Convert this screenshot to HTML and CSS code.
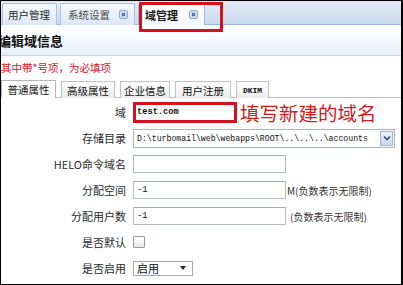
FILE: index.html
```html
<!DOCTYPE html>
<html>
<head>
<meta charset="utf-8">
<link rel="stylesheet" href="styles.css">
</head>
<body>
<div class="frame">
  <div class="tabbar">
    <div class="tab tab-1"><span class="tab-text">用户管理</span></div>
    <div class="tab tab-2"><span class="tab-text">系统设置</span><span class="close"><svg width="9" height="9" viewBox="0 0 9 9"><rect x="0.5" y="0.5" width="8" height="8" rx="1.5" fill="#d3e0f1" stroke="#8fa8cc"/><path d="M3 3 L6 6 M6 3 L3 6" stroke="#3c5f93" stroke-width="1.1"/></svg></span></div>
    <div class="tab tab-3 active"><span class="tab-text">域管理</span><span class="close"><svg width="9" height="9" viewBox="0 0 9 9"><rect x="0.5" y="0.5" width="8" height="8" rx="1.5" fill="#d3e0f1" stroke="#8fa8cc"/><path d="M3 3 L6 6 M6 3 L3 6" stroke="#3c5f93" stroke-width="1.1"/></svg></span></div>
  </div>
  <div class="highlight"></div>
  <div class="header"><span class="title">编辑域信息</span></div>
  <div class="note">其中带*号项，为必填项</div>
  <div class="subtabs">
    <div class="stab st-1 active">普通属性</div>
    <div class="stab st-2">高级属性</div>
    <div class="stab st-3">企业信息</div>
    <div class="stab st-4">用户注册</div>
    <div class="stab st-5 dkim">DKIM</div>
  </div>
  <div class="form">
    <div class="row">
      <label class="lbl">域</label>
      <span class="redbox"><span class="field mono">test.com</span></span>
      <span class="annot">填写新建的域名</span>
    </div>
    <div class="row">
      <label class="lbl">存储目录</label>
      <span class="select-wide"><span class="mono path">D:\turbomail\web\webapps\ROOT\..\..\..\accounts</span><span class="arrow"><svg width="8" height="6" viewBox="0 0 8 6"><path d="M1 1.5 L4 4.5 L7 1.5" fill="none" stroke="#2d4e86" stroke-width="1.6"/></svg></span></span>
    </div>
    <div class="row">
      <label class="lbl">HELO命令域名</label>
      <span class="input"></span>
    </div>
    <div class="row">
      <label class="lbl">分配空间</label>
      <span class="input mono">-1</span><span class="hint">M(负数表示无限制)</span>
    </div>
    <div class="row">
      <label class="lbl">分配用户数</label>
      <span class="input mono">-1</span><span class="hint hint-gap">(负数表示无限制)</span>
    </div>
    <div class="row">
      <label class="lbl">是否默认</label>
      <span class="checkbox"></span>
    </div>
    <div class="row">
      <label class="lbl">是否启用</label>
      <span class="select-small"><span class="sel-text">启用</span><span class="tri"></span></span>
    </div>
    <div class="row">
      <label class="lbl"></label>
      <span class="input"></span>
    </div>
  </div>
</div>
</body>
</html>
```
FILE: styles.css
```css
html, body {
  margin: 0;
  padding: 0;
  background: #fff;
}
.frame {
  position: relative;
  width: 403px;
  height: 285px;
  box-sizing: border-box;
  border: 1px solid #000;
  border-right-width: 2px;
  overflow: hidden;
  background: #fff;
  font-family: "Noto Sans CJK SC", "DejaVu Sans", sans-serif;
  font-size: 11px;
  color: #222;
}
.tabbar {
  height: 24px;
  box-sizing: border-box;
  display: flex;
  align-items: flex-end;
  gap: 3px;
  padding-left: 1px;
  background: linear-gradient(#e2eaf6, #cbdaef);
  border-bottom: 1px solid #99b6de;
}
.tab {
  box-sizing: border-box;
  display: flex;
  align-items: center;
  border: 1px solid #a9c1e2;
  border-bottom: none;
  border-radius: 2px 2px 0 0;
  background: linear-gradient(#f6f9fd, #dce7f5);
  font-size: 10.5px;
  color: #2a2a2a;
  margin-bottom: -1px;
  height: 22px;
}
.tab-1 { width: 55px; padding-left: 5px; }
.tab-2 { width: 75px; padding-left: 7px; color: #4a4a4a; }
.tab-3 { width: 67px; padding-left: 6px; }
.tab.active {
  background: linear-gradient(#ffffff, #f4f8fd);
  border-color: #9fb9dd;
  font-weight: bold;
  font-size: 11px;
  color: #1a1a1a;
}
.tab-text { white-space: nowrap; }
.close {
  display: flex;
  margin-left: auto;
  margin-right: 6px;
}
.highlight {
  position: absolute;
  left: 138px;
  top: 1px;
  width: 84px;
  height: 30px;
  box-sizing: border-box;
  border: 3px solid #d4121e;
}
.header {
  height: 31px;
  box-sizing: border-box;
  display: flex;
  align-items: center;
  background: linear-gradient(#ffffff 0%, #f8fbfe 40%, #e6eef9 100%);
  border-bottom: 1px solid #cfd8e4;
}
.title {
  margin-left: -3px;
  font-size: 13px;
  font-weight: bold;
  color: #111;
  white-space: nowrap;
}
.note {
  height: 24px;
  line-height: 24px;
  font-size: 10.5px;
  color: #e0141e;
  white-space: nowrap;
}
.subtabs {
  height: 18px;
  box-sizing: border-box;
  display: flex;
  align-items: flex-end;
  gap: 5px;
  border-bottom: 1px solid #bdbdbd;
}
.stab {
  box-sizing: border-box;
  display: flex;
  align-items: center;
  justify-content: center;
  border: 1px solid #c2c2c2;
  border-bottom: none;
  background: linear-gradient(#ffffff, #ececec);
  font-size: 10.5px;
  color: #111;
  margin-bottom: -1px;
  height: 17px;
}
.stab.active { background: #fff; border-color: #b6b6b6; height: 18px; }
.st-1 { width: 55px; }
.st-2 { width: 54px; }
.st-3 { width: 50px; }
.st-4 { width: 56px; }
.st-5 { width: 33px; }
.dkim {
  font-family: "Liberation Mono", monospace;
  font-size: 8px;
  font-weight: bold;
}
.form {
  padding-top: 1px;
  display: flex;
  flex-direction: column;
}
.row {
  height: 26px;
  display: flex;
  align-items: center;
}
.lbl {
  width: 125px;
  flex: none;
  text-align: right;
  margin-right: 7px;
  font-size: 11px;
  color: #2a2a2a;
  white-space: nowrap;
}
.mono {
  font-family: "Liberation Mono", monospace;
  font-size: 8.7px;
  color: #111;
}
.redbox {
  display: flex;
  width: 104px;
  height: 21px;
  box-sizing: border-box;
  border: 3px solid #d4121e;
}
.field {
  flex: 1;
  display: flex;
  align-items: center;
  padding-left: 1px;
  background: #fff;
  font-weight: bold;
}
.annot {
  margin-left: 3px;
  font-size: 19.5px;
  color: #d41a1a;
  white-space: nowrap;
}
.select-wide {
  width: 262px;
  height: 19px;
  box-sizing: border-box;
  display: flex;
  align-items: center;
  border: 1px solid #a9b3c2;
  background: #fff;
  padding-left: 3px;
  padding-right: 1px;
}
.path {
  flex: 1 1 auto;
  min-width: 0;
  overflow: hidden;
  white-space: nowrap;
  font-size: 8.2px;
}
.arrow {
  flex: none;
  margin-left: 3px;
  width: 13px;
  height: 15px;
  box-sizing: border-box;
  display: flex;
  align-items: center;
  justify-content: center;
  border: 1px solid #9fb4d3;
  background: linear-gradient(#eef3fb, #c9d8ee);
}
.input {
  width: 153px;
  height: 18px;
  box-sizing: border-box;
  display: flex;
  align-items: center;
  padding-left: 3px;
  border: 1px solid #b7bcc6;
  border-top-color: #a7acb6;
  background: #fff;
}
.hint {
  font-size: 10px;
  color: #333;
  white-space: nowrap;
  margin-left: 1px;
}
.hint-gap { margin-left: 4px; }
.checkbox {
  width: 12px;
  height: 12px;
  box-sizing: border-box;
  border: 1px solid #9a9a9a;
  border-radius: 1px;
  background: linear-gradient(#ffffff, #e6e6e6);
}
.select-small {
  width: 60px;
  height: 15px;
  box-sizing: border-box;
  display: flex;
  align-items: center;
  border: 1px solid #a9a9a9;
  background: #fff;
  padding-left: 3px;
  font-size: 11px;
  color: #111;
}
.tri {
  margin-left: auto;
  margin-right: 6px;
  width: 0;
  height: 0;
  border-left: 3px solid transparent;
  border-right: 3px solid transparent;
  border-top: 4px solid #222;
}
```
